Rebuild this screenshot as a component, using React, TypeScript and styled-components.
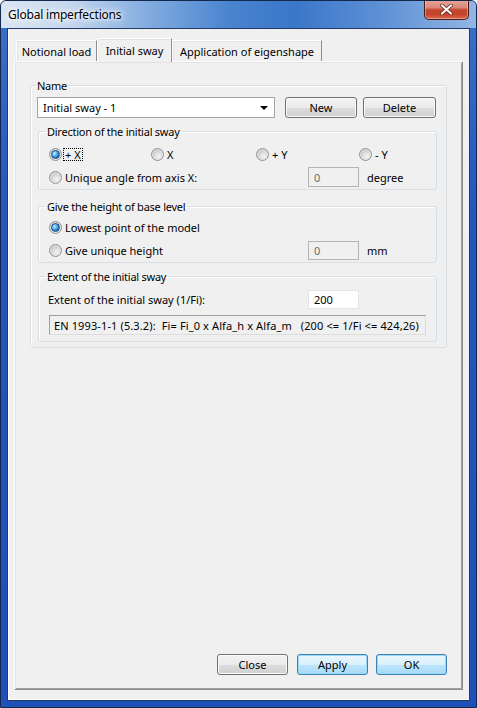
import React from "react";
import styled, { createGlobalStyle } from "styled-components";

const FONT = `"Noto Sans", "Open Sans", sans-serif`;

const GlobalStyle = createGlobalStyle`
  html, body { margin: 0; padding: 0; background: #ffffff; }
  body { font-family: ${FONT}; font-size: 11px; color: #000; }
  * { box-sizing: border-box; }
`;

const Window = styled.div`
  width: 477px;
  height: 708px;
  display: flex;
  flex-direction: column;
  border: 1px solid #14284d;
  border-radius: 6px 6px 0 0;
  padding: 0 6px 6px 6px;
  background: linear-gradient(to bottom, #3a72c8 0%, #2257bd 30%, #1d50b8 100%);
  overflow: hidden;
`;

const TitleBar = styled.div`
  height: 27px;
  margin: 0 -6px;
  padding: 0 7px 0 7px;
  display: flex;
  align-items: flex-start;
  background: linear-gradient(
    to right,
    #dbe6f4 0%,
    #c6d8ee 14%,
    #86aee0 30%,
    #4a84cf 48%,
    #3b77c9 62%,
    #5d90d5 80%,
    #93b6e4 100%
  );
`;

const TitleText = styled.div`
  font-family: ${FONT};
  font-size: 12px;
  line-height: 27px;
  color: #000;
  text-shadow: 0 0 6px #ffffff, 0 0 3px #ffffff, 0 0 8px rgba(255, 255, 255, 0.9);
  letter-spacing: -0.2px;
`;

const CloseButton = styled.div`
  margin-left: auto;
  margin-top: -1px;
  width: 45px;
  height: 20px;
  border: 1px solid #4a1a14;
  border-top: none;
  border-radius: 0 0 5px 5px;
  background: linear-gradient(to bottom, #e6a699 0%, #d98878 40%, #c4472f 52%, #c4432c 75%, #d86a4c 100%);
  box-shadow: inset 0 0 0 1px rgba(255, 220, 210, 0.45);
  display: flex;
  align-items: center;
  justify-content: center;
`;

const Client = styled.div`
  flex: 1;
  display: flex;
  flex-direction: column;
  background: #f0f0f0;
  border: 1px solid #1f3a66;
  box-shadow: inset 1px 0 0 #ffffff, inset 0 -1px 0 #ffffff;
  padding: 9px 6px 10px 6px;
`;

const TabRow = styled.div`
  display: flex;
  align-items: flex-end;
  height: 23px;
  margin-left: 2px;
  position: relative;
  z-index: 1;
`;

const Tab = styled.div<{ $w: number; $active?: boolean }>`
  width: ${(p) => p.$w}px;
  height: ${(p) => (p.$active ? 24 : 21)}px;
  margin-bottom: ${(p) => (p.$active ? -1 : 0)}px;
  display: flex;
  align-items: ${(p) => (p.$active ? "flex-start" : "center")};
  padding-top: ${(p) => (p.$active ? 4 : 0)}px;
  justify-content: center;
  background: #f0f0f0;
  border-top: 1px solid #ffffff;
  border-left: 1px solid #ffffff;
  border-right: 1px solid #8e8e8e;
  box-shadow: ${(p) => (p.$active ? "inset 0 1px 0 #e3e3e3" : "inset 0 1px 0 #e3e3e3, inset 1px 0 0 #e3e3e3")};
  white-space: nowrap;
`;

const Panel = styled.div`
  flex: 1;
  display: flex;
  flex-direction: column;
  border: 1px solid;
  border-color: #ffffff #8f8f8f #8f8f8f #ffffff;
  box-shadow: inset 1px 1px 0 #e3e3e3, inset -1px -1px 0 #a0a0a0;
  padding: 0 15px 14px 15px;
`;

const Group = styled.fieldset`
  margin: 0;
  border: 1px solid #d5dfe5;
  border-radius: 3px;
  box-shadow: inset 1px 1px 0 #ffffff;
  min-width: 0;
`;

const NameGroup = styled(Group)`
  margin-top: 16px;
  padding: 4px 9px 5px 6px;
`;

const InnerGroup = styled(Group)<{ $gap: number; $pt: number; $pb: number }>`
  margin: ${(p) => p.$gap}px 0 0 1px;
  padding: ${(p) => p.$pt}px 0 ${(p) => p.$pb}px 6px;
`;

const Legend = styled.legend`
  padding: 0 2px;
  margin-left: 0;
  line-height: 15px;
  font-size: 11px;
  letter-spacing: -0.25px;
`;

const NameLegend = styled(Legend)`
  margin-left: -1px;
  padding: 0 1px;
`;

const NameRow = styled.div`
  display: flex;
  align-items: center;
  height: 21px;
`;

const Combo = styled.div`
  width: 238px;
  height: 21px;
  background: #ffffff;
  border: 1px solid #a6a6a6;
  display: flex;
  align-items: center;
  padding: 0 6px 0 5px;
`;

const ComboText = styled.span`
  flex: 1;
`;

const ComboArrow = styled.span`
  width: 0;
  height: 0;
  border-left: 4px solid transparent;
  border-right: 4px solid transparent;
  border-top: 4px solid #000;
  margin-top: 1px;
`;

const Button = styled.div<{ $w: number; $default?: boolean; $ml: number }>`
  width: ${(p) => p.$w}px;
  height: 21px;
  margin-left: ${(p) => p.$ml}px;
  border: 1px solid ${(p) => (p.$default ? "#3c7fb1" : "#707070")};
  border-radius: 3px;
  background: ${(p) =>
    p.$default
      ? "linear-gradient(to bottom, #eaf6fd 0%, #d9f0fc 50%, #bee6fd 51%, #a7d9f5 100%)"
      : "linear-gradient(to bottom, #f2f2f2 0%, #ebebeb 50%, #dddddd 51%, #cfcfcf 100%)"};
  box-shadow: ${(p) => (p.$default ? "inset 0 0 0 1px #9cdaf7" : "inset 0 0 0 1px #fcfcfc")};
  display: flex;
  align-items: center;
  justify-content: center;
  padding-bottom: 1px;
`;

const OptionRow = styled.div<{ $mt?: number }>`
  display: flex;
  align-items: center;
  height: 20px;
  margin-top: ${(p) => p.$mt ?? 0}px;
  padding-left: 4px;
`;

const Option = styled.div<{ $w?: number }>`
  display: flex;
  align-items: center;
  width: ${(p) => (p.$w ? `${p.$w}px` : "auto")};
  flex: none;
`;

const RadioCircle = styled.span<{ $on?: boolean }>`
  width: 13px;
  height: 13px;
  border-radius: 50%;
  border: 1px solid #929292;
  background: radial-gradient(circle at 62% 66%, #f4f4f4 0%, #dcdcdc 40%, #bababa 85%, #a8a8a8 100%);
  box-shadow: inset 0 0 0 1px rgba(236, 236, 236, 0.7);
  display: flex;
  align-items: center;
  justify-content: center;
  flex: none;

  &::after {
    content: "";
    display: ${(p) => (p.$on ? "block" : "none")};
    width: 7px;
    height: 7px;
    border-radius: 50%;
    border: 1px solid #1b4f80;
    background: radial-gradient(circle at 35% 35%, #c3ecff 0%, #4aa5e6 45%, #1566b0 75%, #0d4a86 100%);
  }
`;

const OptionText = styled.span<{ $focus?: boolean }>`
  margin-left: ${(p) => (p.$focus ? 1 : 3)}px;
  padding: ${(p) => (p.$focus ? "0 1px" : "0")};
  border: ${(p) => (p.$focus ? "1px dotted #000" : "none")};
  line-height: ${(p) => (p.$focus ? 11 : 13)}px;
  white-space: nowrap;
`;

const Field = styled.div<{ $disabled?: boolean; $h?: number }>`
  width: 51px;
  height: ${(p) => p.$h ?? 20}px;
  flex: none;
  border: 1px solid ${(p) => (p.$disabled ? "#b4b4b4" : "#e2e3ea")};
  background: ${(p) => (p.$disabled ? "#f0f0f0" : "#ffffff")};
  color: ${(p) => (p.$disabled ? "#6d6d6d" : "#000000")};
  display: flex;
  align-items: center;
  padding-left: 5px;
`;

const Unit = styled.span`
  margin-left: 8px;
  white-space: nowrap;
`;

const ExtentRow = styled.div`
  display: flex;
  align-items: center;
  height: 20px;
  padding-left: 3px;
`;

const ExtentLabel = styled.span`
  width: 260px;
  flex: none;
  white-space: nowrap;
`;

const InfoBox = styled.div`
  margin: 6px 10px 0 4px;
  height: 20px;
  border: 1px solid;
  border-color: #a0a0a0 #dcdcdc #dcdcdc #a0a0a0;
  background: #f0f0f0;
  display: flex;
  align-items: center;
  padding-left: 4px;
  white-space: pre;
  letter-spacing: 0.12px;
`;

const Spacer = styled.div`
  flex: 1;
`;

const Footer = styled.div`
  display: flex;
  justify-content: flex-end;
`;

function Radio({ on, label, width, focus }: { on?: boolean; label: string; width?: number; focus?: boolean }) {
  return (
    <Option $w={width}>
      <RadioCircle $on={on} />
      <OptionText $focus={focus}>{label}</OptionText>
    </Option>
  );
}

export default function App() {
  return (
    <>
      <GlobalStyle />
      <Window>
        <TitleBar>
          <TitleText>Global imperfections</TitleText>
          <CloseButton>
            <svg width="13" height="11" viewBox="0 0 13 11">
              <path
                d="M2 1.5 L11 9.5 M11 1.5 L2 9.5"
                stroke="#5a1c14"
                strokeWidth="3.6"
                strokeLinecap="round"
                fill="none"
              />
              <path
                d="M2 1.5 L11 9.5 M11 1.5 L2 9.5"
                stroke="#ffffff"
                strokeWidth="2.2"
                strokeLinecap="round"
                fill="none"
              />
            </svg>
          </CloseButton>
        </TitleBar>
        <Client>
          <TabRow>
            <Tab $w={81}>Notional load</Tab>
            <Tab $w={75} $active>
              Initial sway
            </Tab>
            <Tab $w={150}>Application of eigenshape</Tab>
          </TabRow>
          <Panel>
            <NameGroup>
              <NameLegend>Name</NameLegend>
              <NameRow>
                <Combo>
                  <ComboText>Initial sway - 1</ComboText>
                  <ComboArrow />
                </Combo>
                <Button $w={72} $ml={10}>New</Button>
                <Button $w={73} $ml={6}>Delete</Button>
              </NameRow>

              <InnerGroup $gap={6} $pt={5} $pb={2}>
                <Legend>Direction of the initial sway</Legend>
                <OptionRow>
                  <Radio on focus label="+ X" width={102} />
                  <Radio label="X" width={105} />
                  <Radio label="+ Y" width={103} />
                  <Radio label="- Y" />
                </OptionRow>
                <OptionRow $mt={3}>
                  <Radio label="Unique angle from axis X:" width={259} />
                  <Field $disabled>0</Field>
                  <Unit>degree</Unit>
                </OptionRow>
              </InnerGroup>

              <InnerGroup $gap={9} $pt={3} $pb={2}>
                <Legend>Give the height of base level</Legend>
                <OptionRow>
                  <Radio on label="Lowest point of the model" />
                </OptionRow>
                <OptionRow $mt={3}>
                  <Radio label="Give unique height" width={259} />
                  <Field $disabled $h={19}>0</Field>
                  <Unit>mm</Unit>
                </OptionRow>
              </InnerGroup>

              <InnerGroup $gap={6} $pt={5} $pb={6}>
                <Legend>Extent of the initial sway</Legend>
                <ExtentRow>
                  <ExtentLabel>Extent of the initial sway (1/Fi):</ExtentLabel>
                  <Field $h={19}>200</Field>
                </ExtentRow>
                <InfoBox>EN 1993-1-1 (5.3.2):  Fi= Fi_0 x Alfa_h x Alfa_m   (200 &lt;= 1/Fi &lt;= 424,26)</InfoBox>
              </InnerGroup>
            </NameGroup>
            <Spacer />
            <Footer>
              <Button $w={71} $ml={0}>Close</Button>
              <Button $w={71} $ml={9} $default>Apply</Button>
              <Button $w={71} $ml={8} $default>OK</Button>
            </Footer>
          </Panel>
        </Client>
      </Window>
    </>
  );
}
